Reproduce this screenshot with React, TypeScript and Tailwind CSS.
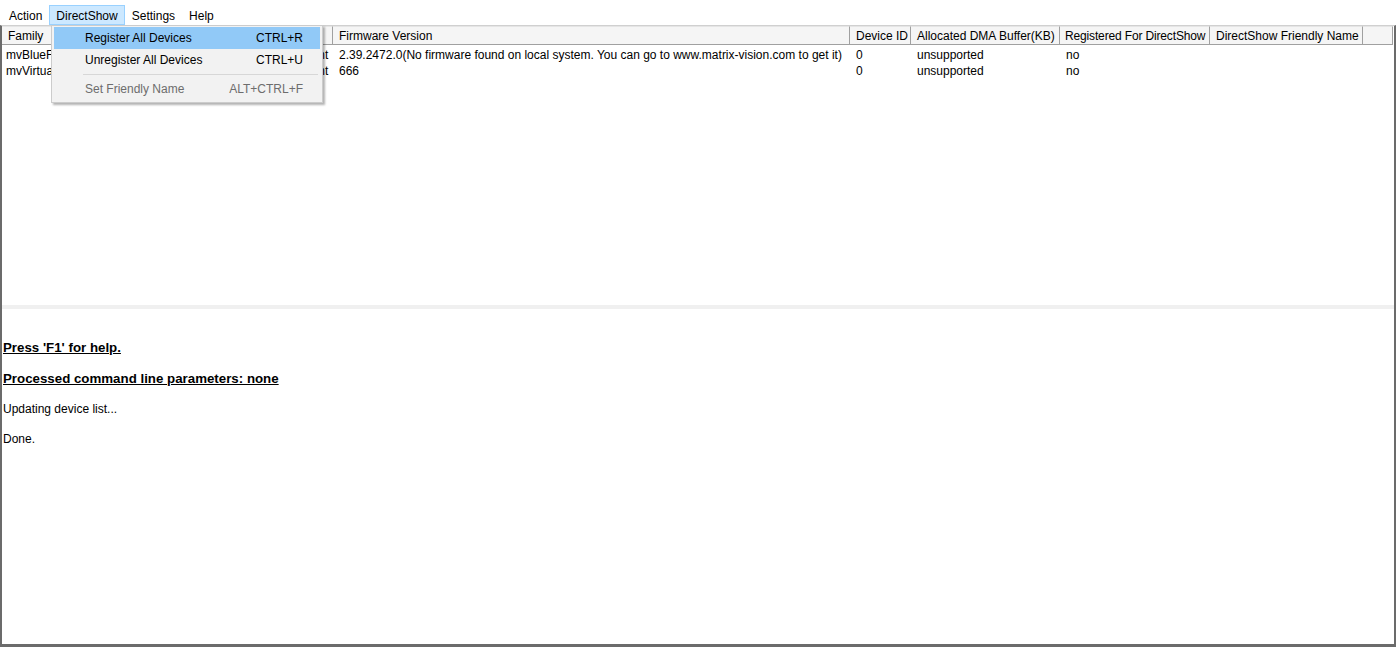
import React from 'react';

// columnas de la lista de dispositivos
const columns = [
  { title: 'Family', w: 'w-[110px]' },
  { title: 'Product', w: 'w-[118px]' },
  { title: 'Serial', w: 'w-[50px]' },
  { title: 'State', w: 'w-[53px]' },
  { title: 'Firmware Version', w: 'w-[517px]' },
  { title: 'Device ID', w: 'w-[61px]' },
  { title: 'Allocated DMA Buffer(KB)', w: 'w-[149px]' },
  { title: 'Registered For DirectShow', w: 'w-[150px]' },
  { title: 'DirectShow Friendly Name', w: 'w-[153px]' },
];

const rows = [
  [
    'mvBlueFOX3',
    'mvBlueFOX3-2032C',
    'FF0034',
    'Present',
    '2.39.2472.0(No firmware found on local system. You can go to www.matrix-vision.com to get it)',
    '0',
    'unsupported',
    'no',
    '',
  ],
  ['mvVirtualDevice', 'VirtualDevice', 'VD0001', 'Present', '666', '0', 'unsupported', 'no', ''],
];

const menuItems = ['Action', 'DirectShow', 'Settings', 'Help'];

const dropItems = [
  { label: 'Register All Devices', key: 'CTRL+R', active: true },
  { label: 'Unregister All Devices', key: 'CTRL+U' },
  { sep: true },
  { label: 'Set Friendly Name', key: 'ALT+CTRL+F', disabled: true },
];

function DropMenu() {
  return (
    <div className="absolute left-[51px] top-[25px] w-[272px] border border-[#cccccc] bg-[#f2f2f2] px-[2px] pb-[2px] pt-[1px] shadow-[2px_2px_2px_rgba(0,0,0,0.3)]">
      {dropItems.map((it, i) =>
        it.sep ? (
          <div key={i} className="my-[3px] ml-[29px] mr-[2px] h-px bg-[#d7d7d7]" />
        ) : (
          <div
            key={i}
            className={`flex h-[22px] items-center justify-between pl-[31px] pr-[17px] ${
              it.active ? 'bg-[#91c9f7]' : ''
            } ${it.disabled ? 'text-[#6d6d6d]' : 'text-black'}`}
          >
            <span>{it.label}</span>
            <span>{it.key}</span>
          </div>
        )
      )}
    </div>
  );
}

export default function App() {
  return (
    <div className="relative flex h-[647px] w-[1396px] flex-col overflow-hidden bg-white font-['Liberation_Sans',Arial,sans-serif] text-[12px] text-black">
      {/* barra de menú */}
      <div className="flex h-[25px] items-end pl-[2px]">
        {menuItems.map((m) => (
          <div
            key={m}
            className={
              m === 'DirectShow'
                ? 'flex h-[20px] items-center border border-[#99d1ff] bg-[#cce8ff] px-[6px] pt-[1px]'
                : 'flex h-[20px] items-center border border-transparent px-[6px] pt-[1px]'
            }
          >
            {m}
          </div>
        ))}
      </div>

      {/* ventana principal */}
      <div className="flex flex-1 flex-col border-x-2 border-b-[3px] border-t border-[#6b6b6b] border-t-[#d0d0d0]">
        {/* lista */}
        <div className="h-[279px]">
          <div className="flex h-[19px] bg-white">
            {columns.map((c) => (
              <div
                key={c.title}
                className={`${c.w} flex h-[19px] shrink-0 items-center overflow-hidden whitespace-nowrap border-b border-r border-t border-[#a0a0a0] border-t-[#e5e5e5] bg-[#f5f5f5] ${
                  c.title === 'Registered For DirectShow' ? 'pl-[5px] tracking-[-0.15px]' : 'pl-[6px]'
                }`}
              >
                {c.title}
              </div>
            ))}
            <div className="h-[19px] w-[30px] shrink-0 border-b border-r border-t border-[#a0a0a0] border-t-[#e5e5e5] bg-[#f5f5f5]" />
          </div>
          <div className="pt-[2px]">
            {rows.map((r, i) => (
              <div key={i} className="flex h-[16px] items-center">
                {r.map((cell, j) => (
                  <div
                    key={j}
                    className={`${columns[j].w} shrink-0 overflow-hidden whitespace-nowrap ${
                      j === 3 ? 'pl-[7px]' : j >= 4 ? 'pl-[6px]' : 'pl-[4px]'
                    }`}
                  >
                    {cell}
                  </div>
                ))}
              </div>
            ))}
          </div>
        </div>

        {/* separador */}
        <div className="h-[4px] bg-[#f0f0f0]" />

        {/* registro */}
        <div className="flex flex-col pl-[1px] pt-[24px]">
          <div className="flex h-[30px] items-center text-[13.3px] font-bold underline">Press 'F1' for help.</div>
          <div className="flex h-[31px] items-center text-[13.3px] font-bold underline">
            Processed command line parameters: none
          </div>
          <div className="flex h-[30px] items-center">Updating device list...</div>
          <div className="flex h-[30px] items-center">Done.</div>
        </div>
      </div>

      <DropMenu />
    </div>
  );
}
